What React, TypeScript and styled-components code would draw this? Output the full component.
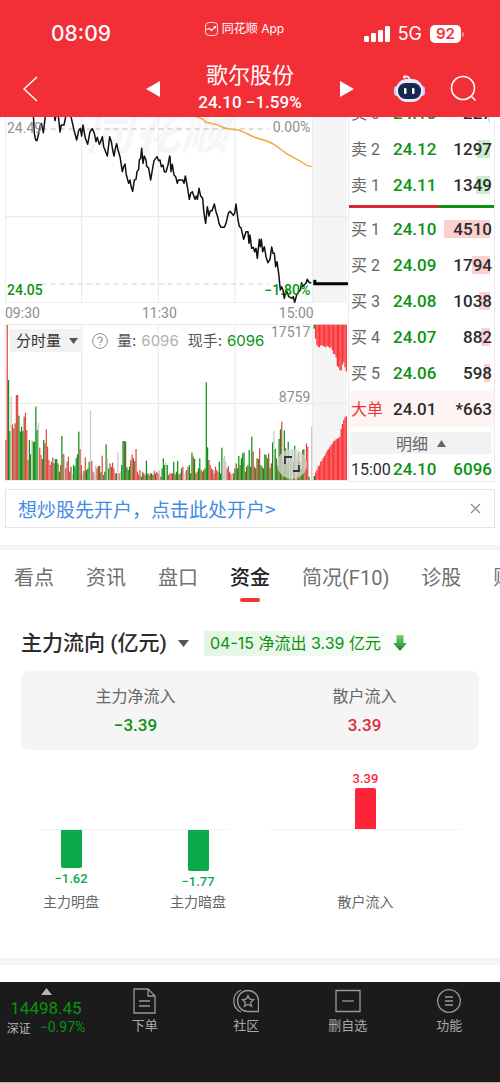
import React from "react";
import styled, { createGlobalStyle, css } from "styled-components";

const RED = "#f22f37";
const GREEN = "#0a9310";
const CJK = '"Noto Sans CJK SC", sans-serif';
const DIN = `Roboto, ${CJK}`;
const UI = `Inter, ${CJK}`;

const GlobalStyle = createGlobalStyle`
  * { box-sizing: border-box; }
  body { margin: 0; background: #fff; color: #2b2b2b; font-family: ${DIN}; }
  button, select { border: 0; margin: 0; padding: 0; background: none; font: inherit; color: inherit; }
  svg { display: block; }
`;

const Page = styled.div`
  width: 100%;
  overflow: hidden;
`;

/* ---------- header ---------- */
const Header = styled.header`
  background: ${RED};
  color: #fff;
`;
const StatusBar = styled.div`
  display: grid;
  grid-template-columns: 1fr auto 1fr;
  align-items: center;
  padding: 21px 36px 13px 25px;
`;
const Clock = styled.time`
  padding-left: 26px;
  font: 500 21px/26px ${UI};
`;
const AppName = styled.div`
  display: flex;
  align-items: center;
  gap: 4px;
  align-self: start;
  font: 400 12px/16px ${UI};
`;
const Signals = styled.div`
  display: flex;
  align-items: center;
  justify-content: flex-end;
  gap: 8px;
  font: 400 18px/26px ${UI};
`;
const Battery = styled.div`
  display: flex;
  align-items: center;
  gap: 1px;
`;
const BatteryBody = styled.span`
  width: 31px;
  border-radius: 5px;
  background: #fff;
  color: ${RED};
  text-align: center;
  font: 600 15px/18px ${UI};
`;
const BatteryTip = styled.span`
  width: 2px;
  height: 5px;
  border-radius: 0 2px 2px 0;
  background: #f8868a;
`;
const NavBar = styled.nav`
  display: grid;
  grid-template-columns: 1fr 208px 1fr;
  align-items: center;
  height: 57px;
  padding: 0 23px;
`;
const IconButton = styled.button`
  display: flex;
  align-items: center;
`;
const StockSwitch = styled.div`
  display: flex;
  align-items: center;
  justify-content: space-between;
`;
const StockTitle = styled.div`
  display: flex;
  flex-direction: column;
  gap: 5px;
  padding-bottom: 4px;
  text-align: center;
  white-space: nowrap;
`;
const StockName = styled.h1`
  margin: 0;
  font: 400 22px/26px ${CJK};
`;
const StockQuote = styled.div`
  font: 500 17px/22px ${DIN};
`;
const NavActions = styled.div`
  display: flex;
  align-items: center;
  justify-content: flex-end;
  gap: 25px;
`;

/* ---------- quote panel ---------- */
const Market = styled.section`
  display: grid;
  grid-template-columns: minmax(0, 1fr) 147px;
  margin: 0 5px;
  overflow: hidden;
`;
const Charts = styled.div`
  display: flex;
  flex-direction: column;
`;
const Plot = styled.div<{ $h: number }>`
  position: relative;
  isolation: isolate;
  height: ${(p) => p.$h}px;
  overflow: hidden;
`;
const PlotSvg = styled.svg`
  width: 100%;
  height: 100%;
`;
const PlotLabel = styled.span<{ $top: number; $right?: boolean; $color?: string }>`
  position: absolute;
  top: ${(p) => p.$top}px;
  ${(p) => (p.$right ? "right: 11%;" : "left: 2px;")}
  color: ${(p) => p.$color || "#8d8d8d"};
  font: 400 14px/16px ${DIN};
  ${(p) => p.$color && "font-weight: 500;"}
`;
const Watermark = styled.span`
  position: absolute;
  z-index: -1;
  top: -19px;
  left: 80px;
  color: #f6f6f6;
  font: italic 700 48px/60px ${CJK};
`;
const TimeAxis = styled.div`
  display: flex;
  justify-content: space-between;
  width: 90%;
  height: 21px;
  color: #8d8d8d;
  font: 400 14px/21px ${DIN};
`;
const VolumeTools = styled.div`
  position: absolute;
  top: 5px;
  left: 5px;
  display: flex;
  align-items: center;
  gap: 9px;
  color: #555;
  font: 400 15px/23px ${UI};
  white-space: nowrap;
`;
const SelectBox = styled.label<{ $title?: boolean }>`
  position: relative;
  display: flex;
  align-items: center;
  ${(p) =>
    p.$title
      ? css`
          gap: 11px;
          font: 500 21px/28px ${DIN};
        `
      : css`
          gap: 7px;
          padding: 0 5px 0 6px;
          background: #f2f2f2;
          color: #333;
        `}
`;
const Select = styled.select`
  appearance: none;
  outline: 0;
`;
const Figure = styled.span<{ $color: string }>`
  margin-left: 5px;
  color: ${(p) => p.$color};
`;
const ExpandButton = styled.button`
  position: absolute;
  right: 12%;
  bottom: 3px;
  display: flex;
  align-items: center;
  justify-content: center;
  width: 30px;
  height: 30px;
  border-radius: 50%;
  background: rgba(215, 215, 210, 0.75);
`;

/* ---------- order book ---------- */
const Book = styled.div`
  margin-top: -22px;
  border: solid #ebebeb;
  border-width: 0 1px 1px;
`;
const Levels = styled.table`
  width: 100%;
  border-collapse: collapse;
  table-layout: fixed;
`;
const Level = styled.tr<{ $big?: boolean }>`
  height: 36px;
  background: ${(p) => (p.$big ? "#fff4f4" : "none")};
`;
const Side = styled.th<{ $color?: string }>`
  width: 44px;
  padding: 0 0 0 2px;
  text-align: left;
  color: ${(p) => p.$color || "#666"};
  font: 400 16px/23px ${DIN};
  white-space: nowrap;
`;
const Price = styled.td<{ $dark?: boolean }>`
  width: 50px;
  padding: 0;
  color: ${(p) => (p.$dark ? "#2b2b2b" : GREEN)};
  font: 500 17px/23px ${DIN};
`;
const Qty = styled.td<{ $green?: boolean }>`
  position: relative;
  padding: 0 2px 0 0;
  text-align: right;
  color: ${(p) => (p.$green ? GREEN : "#2b2b2b")};
  font: 500 17px/23px ${DIN};
`;
const QtyBar = styled.span<{ $buy: boolean }>`
  position: absolute;
  top: 9px;
  right: 4px;
  height: 18px;
  background: ${(p) => (p.$buy ? "#fccfd0" : "#cdebce")};
`;
const QtyText = styled.span`
  position: relative;
`;
const Balance = styled.div`
  display: flex;
  height: 3px;
  margin: 2px 0 3px;
  background: linear-gradient(to right, #d9272f 62%, #0a9310 62%);
`;
const DetailsButton = styled.button`
  display: flex;
  align-items: center;
  justify-content: center;
  gap: 9px;
  width: calc(100% - 5px);
  margin: 5px 3px 4px 2px;
  background: #f2f2f2;
  color: #666;
  font: 400 16px/22px ${CJK};
`;
const TradeRow = styled.tr`
  height: 23px;
`;

/* ---------- account banner ---------- */
const Banner = styled.aside`
  display: flex;
  align-items: center;
  justify-content: space-between;
  height: 39px;
  margin: 7px 5px 17px;
  padding: 0 13px 0 12px;
  border: 1px solid #e3e5e7;
`;
const BannerLink = styled.a`
  color: #4489e4;
  text-decoration: none;
  white-space: nowrap;
  font: 400 19px/26px ${CJK};
`;
const Band = styled.div<{ $h: number }>`
  height: ${(p) => p.$h}px;
  background: #f4f4f4;
`;

/* ---------- tabs ---------- */
const Tabs = styled.div`
  display: flex;
  gap: 32px;
  padding: 13px 0 8px 14px;
  overflow: hidden;
`;
const Tab = styled.button<{ $active?: boolean }>`
  display: flex;
  flex: none;
  flex-direction: column;
  align-items: center;
  gap: 5px;
  color: ${(p) => (p.$active ? "#222" : "#707070")};
  font: ${(p) => (p.$active ? 500 : 400)} 20px/30px ${DIN};
  &::after {
    content: "";
    width: 20px;
    height: 4px;
    border-radius: 2px;
    background: ${(p) => (p.$active ? "#f5343a" : "transparent")};
  }
`;

/* ---------- capital flow ---------- */
const Flow = styled.section`
  padding: 19px 21px 47px;
`;
const FlowHead = styled.div`
  display: flex;
  align-items: center;
  gap: 15px;
  margin-bottom: 14px;
`;
const FlowBadge = styled.div`
  display: flex;
  align-items: center;
  gap: 12px;
  padding: 0 8px 0 6px;
  background: linear-gradient(to right, #e3f5e4, #eef9ee 45%, #fdfefd);
  color: ${GREEN};
  font: 400 16px/25px ${UI};
  white-space: nowrap;
`;
const Summary = styled.dl`
  display: grid;
  grid-template-columns: 1fr 1fr;
  margin: 0;
  padding: 10px 0 11px;
  border-radius: 8px;
  background: #f5f5f5;
  text-align: center;
`;
const SummaryName = styled.dt`
  margin-bottom: 2px;
  color: #666;
  font: 400 16px/28px ${CJK};
`;
const SummaryValue = styled.dd<{ $up?: boolean }>`
  margin: 0;
  color: ${(p) => (p.$up ? "#dd2c33" : GREEN)};
  font: 500 17px/28px ${DIN};
`;
const FlowChart = styled.div`
  display: grid;
  grid-template-columns: 1fr 1fr;
  gap: 42px;
  padding: 15px 19px 0;
`;
const Zone = styled.div<{ $down?: boolean; $single?: boolean }>`
  display: flex;
  justify-content: ${(p) => (p.$single ? "center" : "space-between")};
  align-items: ${(p) => (p.$down ? "flex-start" : "flex-end")};
  height: ${(p) => (p.$down ? 61 : 65)}px;
  padding: 0 3px;
  border-bottom: ${(p) => (p.$down ? 0 : 1)}px solid #f1f1f1;
`;
const Column = styled.div<{ $up?: boolean }>`
  display: flex;
  flex-direction: column;
  align-items: center;
  width: 56px;
  gap: ${(p) => (p.$up ? 1 : 3)}px;
  color: ${(p) => (p.$up ? "#ff2337" : "#0aaa4b")};
  font: 500 13px/16px ${DIN};
`;
const Bar = styled.div<{ $up?: boolean }>`
  width: 21px;
  border-radius: ${(p) => (p.$up ? "2px 2px 0 0" : "0 0 2px 2px")};
  background: currentColor;
`;
const Names = styled.div<{ $single?: boolean }>`
  display: flex;
  justify-content: ${(p) => (p.$single ? "center" : "space-between")};
  padding: 0 3px;
  color: #666;
  font: 400 14px/20px ${CJK};
`;

/* ---------- bottom bar ---------- */
const BottomBar = styled.footer`
  display: grid;
  grid-template-columns: 94px repeat(4, 1fr);
  margin-top: 17px;
  padding: 6px 0 46px;
  border-bottom: 1px solid #b5b5b5;
  background: #1b1b1b;
  color: #a8a8a8;
`;
const IndexCard = styled.button`
  display: flex;
  flex-direction: column;
  align-items: center;
  padding-right: 2px;
  white-space: nowrap;
  color: ${GREEN};
`;
const IndexValue = styled.span`
  padding-top: 2px;
  font: 400 17px/22px ${DIN};
`;
const IndexLine = styled.span`
  display: flex;
  align-items: center;
  gap: 9px;
  font: 400 14px/17px ${DIN};
`;
const IndexName = styled.span`
  color: #b5b5b5;
  font: 400 12px/17px ${CJK};
`;
const Action = styled.button`
  display: flex;
  flex-direction: column;
  align-items: center;
  gap: 1px;
  font: 400 13px/20px ${CJK};
`;

/* ---------- data ---------- */
const sells = [
  { side: "卖 3", price: "24.13", qty: 227 },
  { side: "卖 2", price: "24.12", qty: 1297 },
  { side: "卖 1", price: "24.11", qty: 1349 },
];
const buys = [
  { side: "买 1", price: "24.10", qty: 4510 },
  { side: "买 2", price: "24.09", qty: 1794 },
  { side: "买 3", price: "24.08", qty: 1038 },
  { side: "买 4", price: "24.07", qty: 882 },
  { side: "买 5", price: "24.06", qty: 598 },
];
const maxQty = 4510;

// Morning and afternoon traces, three units to a pixel.
const MORNING =
  "100,14 103,70 107,90 111,92 115,75 120,50 124,40 130,68 136,18 150,-10 163,18 165,32 168,16 175,16 180,66 184,45 192,45 197,20 205,10 213,20 222,60 230,90 236,62 241,55 245,78 249,45 256,85 263,103 270,65 277,56 283,70 288,95 292,82 298,103 303,92 307,80 311,110 317,125 322,138 329,80 334,95 338,120 342,138 346,115 350,101 354,120 360,140 367,185 371,170 375,162 379,195 386,220 390,210 393,228 398,244 403,210 408,208 411,185 416,178 418,150 422,145 425,115 429,160 433,138 438,150 440,168 446,175 452,210 457,180 462,152 471,140 476,152 480,150 484,170 489,165 493,185 498,186 504,165 509,138 510,140";
const AFTERNOON =
  "0,140 3,185 7,163 12,195 17,200 22,220 25,210 38,210 42,220 46,198 52,230 58,268 62,250 67,245 75,268 79,258 82,268 87,235 92,258 98,265 102,310 107,340 112,290 117,318 121,302 126,302 133,282 138,305 143,320 147,340 153,352 163,352 168,340 175,310 180,304 190,316 194,310 198,282 204,330 208,350 213,353 221,388 228,365 234,365 237,400 240,375 245,415 250,412 254,425 258,415 262,445 268,388 271,410 274,388 278,425 283,410 288,440 294,458 300,448 305,411 309,430 313,430 317,470 321,455 326,490 331,540 335,530 339,540 343,565 348,540 353,550 356,560 361,562 366,565 370,560 374,577 380,555 386,545 391,540 395,518 398,530 403,525 408,520 412,508 418,518 424,518";
const AVERAGE =
  "75,18 100,28 106,36 140,44 165,54 185,58 205,60 225,68 245,78 260,84 290,93 310,102 325,112 335,120 350,131 370,142 390,153 410,166 425,170";

// One token per minute: bar height and colour (r up, g down, s flat, b mixed).
const MINUTES =
  "120r 465r 300g 147g 252s 167r 155r 170b 255r 255r 193g 145g 160g 147g 190b 202r 150r 60r 120g 77g 120s 115g 115g 220g 150g 172s 97r 75r 63b 120g 110b 152r 100r 60r 45r 55r 68r 50g 63g 63g 50b 25g 45r 132g 78b 77s 35r 55r 70r 25r 40b 20s 45g 40g 65g 77g 145g 93r 45r 20s 28g 68r 30g 35g 55g 208s 57r 25r 20s 45s 35r 42b 42b 23g 73r 15r 25g 107g 65s 35g 50r 40b 52r 35r 20r 20g 83s 20r 25s 45g 117g 117g 115b 38g 30g 40g 60b 77r 65b 57b 93r 25r 17r 30r 10g 25r 20g 15r 58g 20g 15b 20r 20g 15g 28r 20b 25r 20r 30s 10r 35g 65g 45g 53s 45g 15r 20r 20r 20b 55g 17b 25g 57g 17b 20r 35g 40r 17s 25s 30b 40r 45g 20g 82g 70b 63g 20b 25r 35g 65g 30b 25r 30b 35g 293g 98g 60b 45r 35r 30b 20r 40r 30r 25r 55g 20g 97g 65s 72s 55s 35r 42r 25b 17r 20s 20b 35g 50b 35g 72g 45b 65g 80g 83g 25b 40g 45b 90g 40b 130g 85b 40r 35g 65b 63g 95r 45g 40b 35g 77g 75g 65b 80b 35g 50b 113g 147s 93g 65b 45g 123g 152g 175r 55b 149g 95b 50g 115g 55s 65g 90s 55b 103g 75s 60r 83r 55g 35g 90b 93g 65r 110r 100r 10g 0g 160s";
const TONES: Record<string, string> = { r: "#e04848", g: "#0f8f14", s: "#c9c9c9", b: "#8f5a20" };
const minutes = MINUTES.split(" ").map((t) => ({ h: parseInt(t, 10), tone: TONES[t.slice(-1)] }));
const minuteStep = 921 / minutes.length;

const ASKS = [12, 42, 62, 66, 68, 62, 62, 64, 66, 68, 64, 66, 70, 66, 76, 88, 88, 98, 124, 128, 136, 138, 120, 112, 128, 140];
const BIDS = [12, 22, 30, 40, 44, 55, 58, 66, 72, 80, 88, 92, 98, 104, 108, 116, 118, 122, 124, 126, 130, 154, 168, 180, 188, 191];

/* ---------- icons ---------- */
const Triangle = ({ dir, w, h, color = "#fff" }: { dir: "left" | "right" | "up" | "down"; w: number; h: number; color?: string }) => {
  const points = {
    left: `0,${h / 2} ${w},0 ${w},${h}`,
    right: `0,0 ${w},${h / 2} 0,${h}`,
    up: `0,${h} ${w / 2},0 ${w},${h}`,
    down: `0,0 ${w},0 ${w / 2},${h}`,
  };
  return (
    <svg width={w} height={h} aria-hidden="true">
      <polygon points={points[dir]} fill={color} />
    </svg>
  );
};

const AppIcon = () => (
  <svg width="13" height="14" viewBox="0 0 13 14" fill="none" stroke="#fff" aria-hidden="true">
    <rect x="0.5" y="0.5" width="12" height="13" rx="3.5" strokeWidth="0.8" />
    <path d="M1.5 7.5l3-1 2 2 4-3.6M8.600 4.600h2v2" strokeWidth="1.1" />
  </svg>
);

const SignalIcon = () => (
  <svg width="26" height="16" viewBox="0 0 26 16" fill="#fff" aria-hidden="true">
    <rect x="0" y="10" width="5" height="6" rx="1.2" />
    <rect x="7" y="7" width="5" height="9" rx="1.2" />
    <rect x="14" y="4" width="5" height="12" rx="1.2" />
    <rect x="21" y="0" width="5" height="16" rx="1.2" />
  </svg>
);

const RobotIcon = () => (
  <svg width="31" height="28" viewBox="0 0 31 28" aria-hidden="true">
    <path d="M10 1.500q5-.8 6 3.500" fill="none" stroke="#f4ecff" strokeWidth="1.800" />
    <circle cx="10.500" cy="1.900" r="1.500" fill="#fff" />
    <rect x="0" y="11" width="6" height="10" rx="3" fill="#bcd2ff" />
    <rect x="25" y="11" width="6" height="10" rx="3" fill="#bcd2ff" />
    <rect x="2" y="4" width="27" height="23" rx="11" fill="#efe6fd" />
    <rect x="4" y="8" width="23" height="16" rx="7.500" fill="#17284f" />
    <rect x="10" y="13" width="2.500" height="6" rx="1" fill="#fff" />
    <rect x="18" y="13" width="2.500" height="6" rx="1" fill="#fff" />
  </svg>
);

const Rule = (p: { d: string; dash?: string; color?: string }) => (
  <path d={p.d} fill="none" stroke={p.color || "#e9e9e9"} strokeDasharray={p.dash} vectorEffect="non-scaling-stroke" />
);

const PriceChart = () => (
  <PlotSvg viewBox="0 0 1029 558" preserveAspectRatio="none" aria-hidden="true">
    <rect x="923" y="0" width="103" height="558" fill="#f4f4f4" />
    <Rule d="M1 0V558M230 0V558M460 0V558M690 0V558M922 0V558M0 299H1029M0 557H922" />
    <Rule d="M110 36H790" dash="5 4" color="#bbb" />
    <Rule d="M110 501H790" dash="5 4" color="#dccfc2" />
    <g fill="none" strokeLinejoin="round">
      <g transform="translate(495 -21)">
        <polyline points={AVERAGE} stroke="#f5a33c" strokeWidth="1.400" vectorEffect="non-scaling-stroke" />
        <polyline points={AFTERNOON} stroke="#111" strokeWidth="1.500" vectorEffect="non-scaling-stroke" />
        <path d="M430 517H439" stroke="#000" strokeWidth="5" vectorEffect="non-scaling-stroke" />
        <path d="M431 521H534" stroke="#000" strokeWidth="3" vectorEffect="non-scaling-stroke" />
      </g>
      <polyline transform="translate(-15 -21)" points={MORNING} stroke="#111" strokeWidth="1.500" vectorEffect="non-scaling-stroke" />
    </g>
  </PlotSvg>
);

const VolumeChart = () => (
  <PlotSvg viewBox="0 0 1029 474" preserveAspectRatio="none" aria-hidden="true">
    <rect x="923" y="0" width="103" height="468" fill="#f4f4f4" />
    <Rule d="M1 0V468M230 0V468M460 0V468M690 0V468M922 0V468M0 2H922M0 238H1029M0 469H1029" />
    {minutes.map((m, i) => (
      <rect key={i} x={i * minuteStep + 1} y={468 - m.h} width="3.7" height={m.h} fill={m.tone} />
    ))}
    {ASKS.map((h, i) => (
      <rect key={i} x={926 + i * 3.84} y="2" width="4" height={h} fill={i === 0 ? "#0f8f14" : i % 2 ? "#ff3a3d" : "#f9353a"} />
    ))}
    {BIDS.map((h, i) => (
      <rect key={i} x={926 + i * 3.84} y={468 - h} width="4" height={h} fill={i === 0 ? "#0f8f14" : i % 2 ? "#ff3a3d" : "#f9353a"} />
    ))}
  </PlotSvg>
);

const LevelTable = ({ rows, buy, children }: { rows: typeof sells; buy: boolean; children?: React.ReactNode }) => (
  <Levels>
    <tbody>
      {rows.map((r) => (
        <Level key={r.side}>
          <Side scope="row">{r.side}</Side>
          <Price>{r.price}</Price>
          <Qty>
            <QtyBar $buy={buy} style={{ width: Math.round((r.qty / maxQty) * 46) }} />
            <QtyText>{r.qty}</QtyText>
          </Qty>
        </Level>
      ))}
      {children}
    </tbody>
  </Levels>
);

const FlowGroup = ({ items }: { items: { name: string; value: number }[] }) => {
  const single = items.length === 1;
  const max = Math.max(...items.map((i) => Math.abs(i.value)));
  const size = (v: number) => ({ height: Math.round((Math.abs(v) / max) * 41) });
  return (
    <div>
      <Zone $single={single}>
        {items.map((i) => (
          <Column key={i.name} $up>
            {i.value > 0 && i.value}
            {i.value > 0 && <Bar $up style={size(i.value)} />}
          </Column>
        ))}
      </Zone>
      <Zone $down $single={single}>
        {items.map((i) => (
          <Column key={i.name}>
            {i.value < 0 && <Bar style={size(i.value)} />}
            {i.value < 0 && `−${Math.abs(i.value)}`}
          </Column>
        ))}
      </Zone>
      <Names $single={single}>
        {items.map((i) => (
          <span key={i.name}>{i.name}</span>
        ))}
      </Names>
    </div>
  );
};

const tabs = ["看点", "资讯", "盘口", "资金", "简况(F10)", "诊股", "财务"];

const actions = [
  {
    name: "下单",
    icon: (
      <>
        <path d="M2 1h14l7 7v17H2zM16 1v7h7" />
        <path d="M7 13h11M7 18h11" />
      </>
    ),
  },
  {
    name: "社区",
    icon: (
      <>
        <path d="M8 2A12 12 0 0 0 8 24" />
        <path d="M15 2.500a10.500 10.500 0 1 0 0 21h10.500V13A10.500 10.500 0 0 0 15 2.500z" />
        <path d="M15 7.500l1.700 3.600 3.900.5-2.900 2.700.8 3.900-3.500-1.900-3.500 1.900.8-3.900-2.900-2.700 3.900-.5z" />
      </>
    ),
  },
  {
    name: "删自选",
    icon: (
      <>
        <path d="M1 2.500h24v21H1z" />
        <path d="M7 13h12" />
      </>
    ),
  },
  {
    name: "功能",
    icon: (
      <>
        <circle cx="13" cy="13" r="11.300" />
        <path d="M9 9h8M9 13h8M9 17h8" />
      </>
    ),
  },
];

export default function App() {
  return (
    <Page>
      <GlobalStyle />
      <Header>
        <StatusBar>
          <Clock>08:09</Clock>
          <AppName>
            <AppIcon />
            同花顺 App
          </AppName>
          <Signals>
            <SignalIcon />
            5G
            <Battery>
              <BatteryBody>92</BatteryBody>
              <BatteryTip />
            </Battery>
          </Signals>
        </StatusBar>
        <NavBar>
          <IconButton aria-label="返回">
            <svg width="15" height="26" viewBox="0 0 15 26" fill="none" stroke="#fff" strokeWidth="1.500" aria-hidden="true">
              <path d="M14 1L1 13l13 12" />
            </svg>
          </IconButton>
          <StockSwitch>
            <IconButton aria-label="上一只">
              <Triangle dir="left" w={14} h={16} />
            </IconButton>
            <StockTitle>
              <StockName>歌尔股份</StockName>
              <StockQuote>24.10 −1.59%</StockQuote>
            </StockTitle>
            <IconButton aria-label="下一只">
              <Triangle dir="right" w={14} h={16} />
            </IconButton>
          </StockSwitch>
          <NavActions>
            <IconButton aria-label="助手">
              <RobotIcon />
            </IconButton>
            <IconButton aria-label="搜索">
              <svg width="27" height="27" viewBox="0 0 27 27" fill="none" stroke="#fff" strokeWidth="1.600" aria-hidden="true">
                <circle cx="13" cy="13" r="11.500" />
                <path d="M21 21l4.500 4.500" />
              </svg>
            </IconButton>
          </NavActions>
        </NavBar>
      </Header>

      <Market>
        <Charts>
          <Plot $h={186}>
            <Watermark aria-hidden="true">同花顺</Watermark>
            <PriceChart />
            <PlotLabel $top={3}>24.49</PlotLabel>
            <PlotLabel $top={2} $right>0.00%</PlotLabel>
            <PlotLabel $top={165} $color={GREEN}>24.05</PlotLabel>
            <PlotLabel $top={165} $right $color={GREEN}>−1.80%</PlotLabel>
          </Plot>
          <TimeAxis>
            <span>09:30</span>
            <span>11:30</span>
            <span>15:00</span>
          </TimeAxis>
          <Plot $h={158}>
            <VolumeChart />
            <VolumeTools>
              <SelectBox>
                <Select aria-label="指标">
                  <option>分时量</option>
                </Select>
                <Triangle dir="down" w={9} h={6} color="#555" />
              </SelectBox>
              <IconButton aria-label="说明">
                <svg width="16" height="16" viewBox="0 0 16 16" fill="none" stroke="#8d8d8d" aria-hidden="true">
                  <circle cx="8" cy="8" r="7.400" />
                  <path d="M5.700 6.300a2.300 2.300 0 1 1 3.300 2.100c-.7.4-1 .7-1 1.500M8 11.200v1.300" strokeWidth="1.200" />
                </svg>
              </IconButton>
              <span>
                量:<Figure $color="#b0b0b0">6096</Figure>
              </span>
              <span>
                现手:<Figure $color={GREEN}>6096</Figure>
              </span>
            </VolumeTools>
            <PlotLabel $top={0} $right>17517</PlotLabel>
            <PlotLabel $top={65} $right>8759</PlotLabel>
            <ExpandButton aria-label="全屏">
              <svg width="16" height="16" viewBox="0 0 16 16" fill="none" stroke="#333" strokeWidth="1.800" aria-hidden="true">
                <path d="M1 8V1h7M15 9v6H9" />
              </svg>
            </ExpandButton>
          </Plot>
        </Charts>
        <Book>
          <LevelTable rows={sells} buy={false} />
          <Balance />
          <LevelTable rows={buys} buy>
            <Level $big>
              <Side scope="row" $color={RED}>大单</Side>
              <Price $dark>24.01</Price>
              <Qty>*663</Qty>
            </Level>
          </LevelTable>
          <DetailsButton>
            明细
            <Triangle dir="up" w={9} h={7} color="#666" />
          </DetailsButton>
          <Levels>
            <tbody>
              <TradeRow>
                <Side scope="row" $color="#2b2b2b">15:00</Side>
                <Price>24.10</Price>
                <Qty $green>6096</Qty>
              </TradeRow>
            </tbody>
          </Levels>
        </Book>
      </Market>

      <Banner>
        <BannerLink href="#open">想炒股先开户，点击此处开户&gt;</BannerLink>
        <IconButton aria-label="关闭">
          <svg width="11" height="11" viewBox="0 0 11 11" stroke="#888" strokeWidth="1.200" aria-hidden="true">
            <path d="M1 1l9 9M10 1l-9 9" />
          </svg>
        </IconButton>
      </Banner>
      <Band $h={5} />

      <Tabs role="tablist">
        {tabs.map((t) => (
          <Tab key={t} role="tab" aria-selected={t === "资金"} $active={t === "资金"}>
            {t}
          </Tab>
        ))}
      </Tabs>

      <Flow>
        <FlowHead>
          <SelectBox $title>
            <Select aria-label="资金指标">
              <option>主力流向 (亿元)</option>
            </Select>
            <Triangle dir="down" w={11} h={7} color="#555" />
          </SelectBox>
          <FlowBadge>
            04-15 净流出 3.39 亿元
            <svg width="14" height="16" viewBox="0 0 14 16" aria-hidden="true">
              <defs>
                <linearGradient id="drop" x1="0" y1="0" x2="0" y2="1">
                  <stop offset="0" stopColor="#7fd07a" />
                  <stop offset="1" stopColor="#0d8a17" />
                </linearGradient>
              </defs>
              <path d="M3.500 0h7v8H14l-7 8-7-8h3.500z" fill="url(#drop)" />
            </svg>
          </FlowBadge>
        </FlowHead>
        <Summary>
          <div>
            <SummaryName>主力净流入</SummaryName>
            <SummaryValue>−3.39</SummaryValue>
          </div>
          <div>
            <SummaryName>散户流入</SummaryName>
            <SummaryValue $up>3.39</SummaryValue>
          </div>
        </Summary>
        <FlowChart>
          <FlowGroup items={[{ name: "主力明盘", value: -1.62 }, { name: "主力暗盘", value: -1.77 }]} />
          <FlowGroup items={[{ name: "散户流入", value: 3.39 }]} />
        </FlowChart>
      </Flow>
      <Band $h={7} />

      <BottomBar>
        <IndexCard>
          <Triangle dir="up" w={11} h={7} color="#b5b5b5" />
          <IndexValue>14498.45</IndexValue>
          <IndexLine>
            <IndexName>深证</IndexName>
            −0.97%
          </IndexLine>
        </IndexCard>
        {actions.map((a) => (
          <Action key={a.name}>
            <svg width="26" height="26" viewBox="0 0 26 26" fill="none" stroke="#999" strokeWidth="1.300" aria-hidden="true">
              {a.icon}
            </svg>
            {a.name}
          </Action>
        ))}
      </BottomBar>
    </Page>
  );
}
